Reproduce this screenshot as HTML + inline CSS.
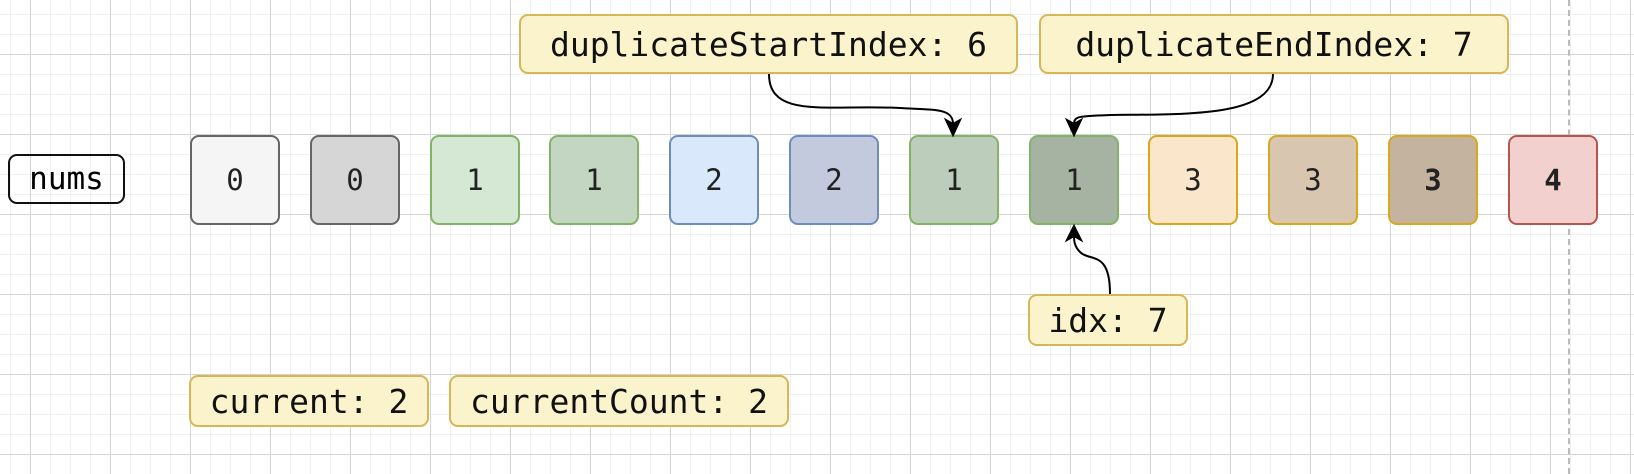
<!DOCTYPE html><html><head><style>
body{margin:0;width:1634px;height:474px;overflow:hidden;background:#fff;
background-image:linear-gradient(#d4d4d4 1px,transparent 1px),linear-gradient(90deg,#d4d4d4 1px,transparent 1px),linear-gradient(#f0f0f0 1px,transparent 1px),linear-gradient(90deg,#f0f0f0 1px,transparent 1px);
background-size:80px 80px,80px 80px,20px 20px,20px 20px;background-position:0 54px,30px 0,0 14px,10px 0;position:relative;font-family:"DejaVu Sans Mono","Liberation Mono",monospace}
.b{position:absolute;box-sizing:border-box;display:flex;align-items:center;justify-content:center;border-radius:9px}
.c{top:135px;width:90px;height:90px;border:2px solid;font-size:29px;color:#222}
.l{background:#fbf3cc;border:2px solid #d6b656;font-size:33px;color:#111}
</style></head><body>
<div style="position:absolute;left:1568px;top:0;height:474px;border-left:2px dashed #bbb"></div>
<div class="b" style="left:8px;top:154px;width:117px;height:50px;border:2px solid #111;font-size:31px">nums</div>
<div class="b c" style="left:190px;background:#f5f5f5;border-color:#666">0</div>
<div class="b c" style="left:310px;background:#d6d6d6;border-color:#666">0</div>
<div class="b c" style="left:430px;background:#d5e8d4;border-color:#82b366">1</div>
<div class="b c" style="left:549px;background:#c3d6c2;border-color:#82b366">1</div>
<div class="b c" style="left:669px;background:#dae8fc;border-color:#6c8ebf">2</div>
<div class="b c" style="left:789px;background:#c3cade;border-color:#6c8ebf">2</div>
<div class="b c" style="left:909px;background:#bccebb;border-color:#82b366">1</div>
<div class="b c" style="left:1029px;background:#a6b3a2;border-color:#82b366">1</div>
<div class="b c" style="left:1148px;background:#fae6cb;border-color:#d6a81a">3</div>
<div class="b c" style="left:1268px;background:#d8c6b0;border-color:#d6a81a">3</div>
<div class="b c" style="left:1388px;background:#c4b49f;border-color:#d6a81a;font-weight:bold">3</div>
<div class="b c" style="left:1508px;background:#f2d0cd;border-color:#b85450;font-weight:bold">4</div>
<div class="b l" style="left:519px;top:14px;width:499px;height:60px">duplicateStartIndex: 6</div>
<div class="b l" style="left:1039px;top:14px;width:470px;height:60px">duplicateEndIndex: 7</div>
<div class="b l" style="left:1028px;top:294px;width:160px;height:52px">idx: 7</div>
<div class="b l" style="left:189px;top:375px;width:240px;height:52px">current: 2</div>
<div class="b l" style="left:449px;top:375px;width:340px;height:52px">currentCount: 2</div>
<svg width="1634" height="474" style="position:absolute;left:0;top:0" fill="none" stroke="#000" stroke-width="2">
<path d="M769 74 C769 120 830 104 900 108 C935 110 953 108 953 124"/>
<path d="M946 120 L953 135 L960 120 L953 124 Z" fill="#000"/>
<path d="M1273 74 C1273 118 1180 114 1110 115 C1080 116 1074 116 1074 124"/>
<path d="M1067 120 L1074 135 L1081 120 L1074 124 Z" fill="#000"/>
<path d="M1110 294 C1110 250 1090 262 1080 252 C1074 246 1074 240 1074 236"/>
<path d="M1067 240 L1074 226 L1081 240 L1074 236 Z" fill="#000"/>
</svg>
</body></html>
